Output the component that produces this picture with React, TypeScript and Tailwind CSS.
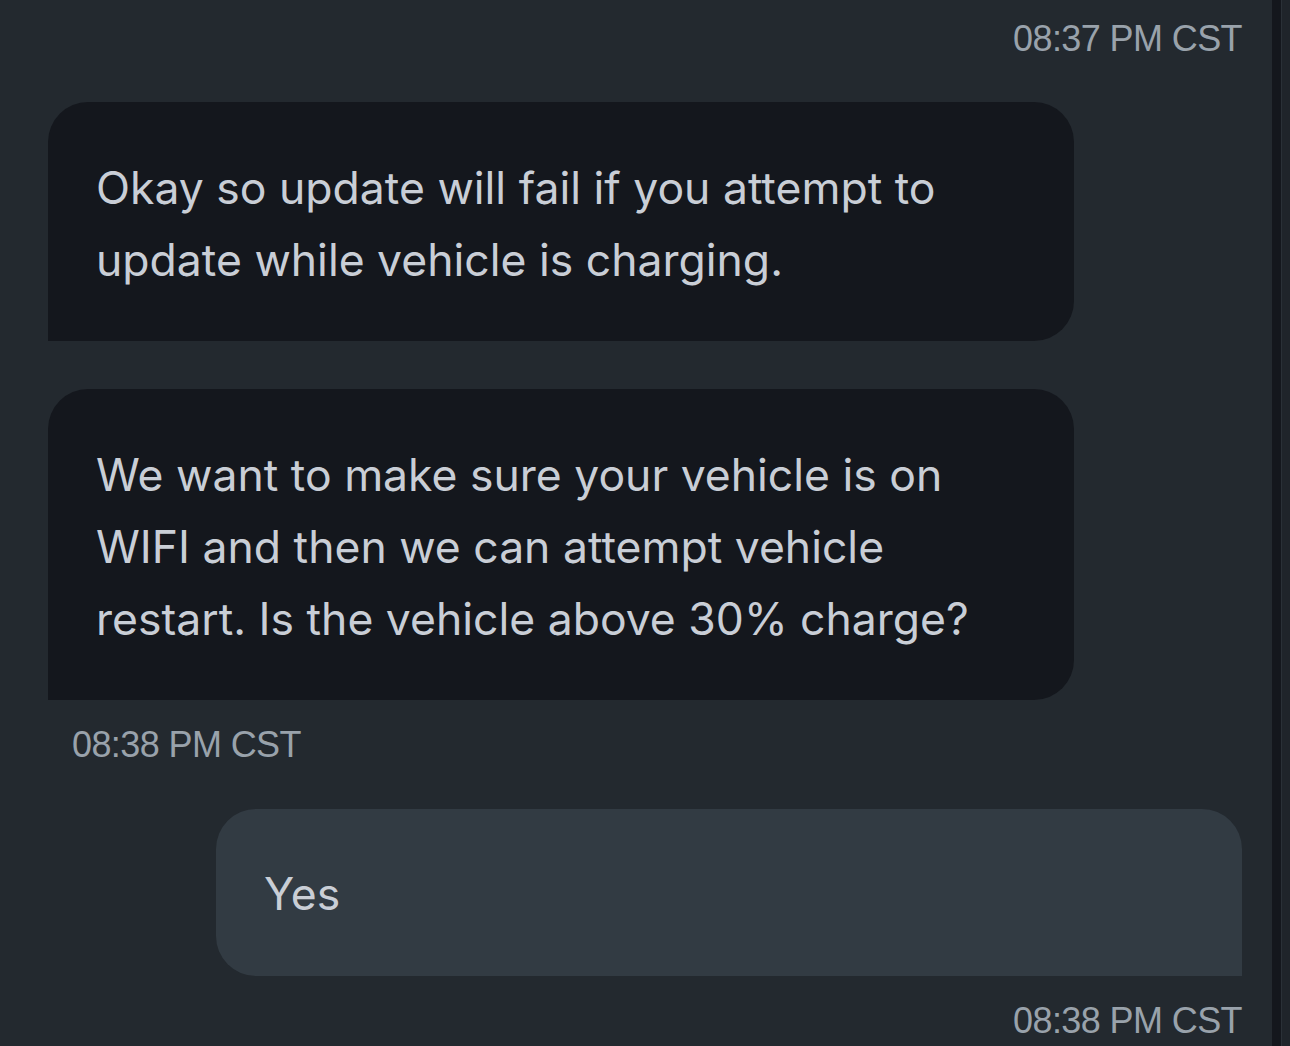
export default function App() {
  const body = { fontFamily: "Inter, 'Noto Sans', sans-serif" };
  const ts = { fontFamily: "'Liberation Sans', Arial, sans-serif" };
  return (
    <div className="flex h-[1046px] w-[1290px] overflow-hidden bg-[#23292f]">
      <div className="flex min-w-0 flex-1 flex-col overflow-hidden pl-12 pr-[30px]">
        <div className="flex h-[78px] shrink-0 items-center justify-end text-[36px] tracking-[-0.6px] text-[#99a2ab]" style={ts}>
          08:37 PM CST
        </div>
        <div className="mt-[24px] w-[1026px] shrink-0 rounded-[40px] rounded-bl-none bg-[#14171d] px-12 pb-[45px] pt-[50px] text-[44.5px] leading-[72px] text-[#c9ced6]" style={body}>
          Okay so update will fail if you attempt to
          <br />
          update while vehicle is charging.
        </div>
        <div className="mt-[48px] w-[1026px] shrink-0 rounded-[40px] rounded-bl-none bg-[#14171d] px-12 pb-[45px] pt-[50px] text-[44.5px] leading-[72px] text-[#c9ced6]" style={body}>
          We want to make sure your vehicle is on
          <br />
          WIFI and then we can attempt vehicle
          <br />
          restart. Is the vehicle above 30% charge?
        </div>
        <div className="flex h-[90px] shrink-0 items-center pl-6 text-[36px] tracking-[-0.6px] text-[#99a2ab]" style={ts}>
          08:38 PM CST
        </div>
        <div className="ml-[168px] mt-[19px] w-[1026px] shrink-0 rounded-[40px] rounded-br-none bg-[#323b43] px-12 pb-[46px] pt-[49px] text-[44.5px] leading-[72px] text-[#c9ced6]" style={body}>
          Yes
        </div>
        <div className="flex h-[90px] shrink-0 items-center justify-end text-[36px] tracking-[-0.6px] text-[#99a2ab]" style={ts}>
          08:38 PM CST
        </div>
      </div>
      <div className="flex w-[18px] shrink-0">
        <div className="w-[9px] bg-[#14171d]" />
        <div className="w-px bg-[#2a3037]" />
        <div className="flex-1 bg-[#1f242a]" />
      </div>
    </div>
  );
}
